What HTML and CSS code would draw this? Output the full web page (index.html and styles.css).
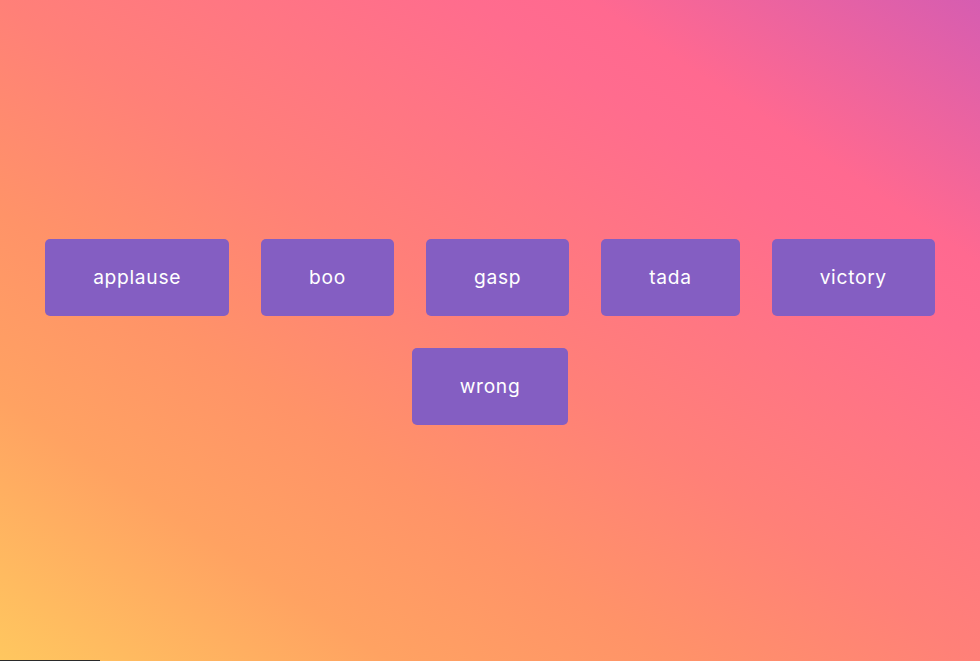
FILE: index.html
```html
<!DOCTYPE html>
<html lang="en">
<head>
<meta charset="UTF-8">
<title>Sound Board</title>
<link rel="stylesheet" href="styles.css">
</head>
<body>
  <div class="buttons">
    <button class="btn">applause</button>
    <button class="btn">boo</button>
    <button class="btn">gasp</button>
    <button class="btn">tada</button>
    <button class="btn">victory</button>
    <button class="btn">wrong</button>
  </div>
  <div class="strip"></div>
</body>
</html>
```
FILE: styles.css
```css
* { box-sizing: border-box; }

html, body { margin: 0; height: 100%; }

body {
  background-image: linear-gradient(to top right, #ffc75f 0%, #ffa262 20%, #ff9368 34%, #ff8078 50%, #ff6c8e 74%, #ff6990 80%, #d65db1 100%);
  font-family: "Inter", "Lato", sans-serif;
  height: 100vh;
  overflow: hidden;
  position: relative;
}

.buttons {
  height: 100%;
  display: flex;
  flex-wrap: wrap;
  align-content: center;
  justify-content: center;
  padding-top: 3px;
}

.btn {
  background-color: #845ec2;
  border-radius: 5px;
  border: none;
  color: #fff;
  margin: 16px;
  padding: 24px 48px;
  height: 77px;
  font-size: 19.2px;
  line-height: 29px;
  letter-spacing: 0.7px;
  font-family: inherit;
  font-weight: 400;
  cursor: pointer;
}

.strip {
  position: absolute;
  left: 0;
  bottom: 0;
  width: 100px;
  height: 1px;
  background: #2a2a2a;
}
```
